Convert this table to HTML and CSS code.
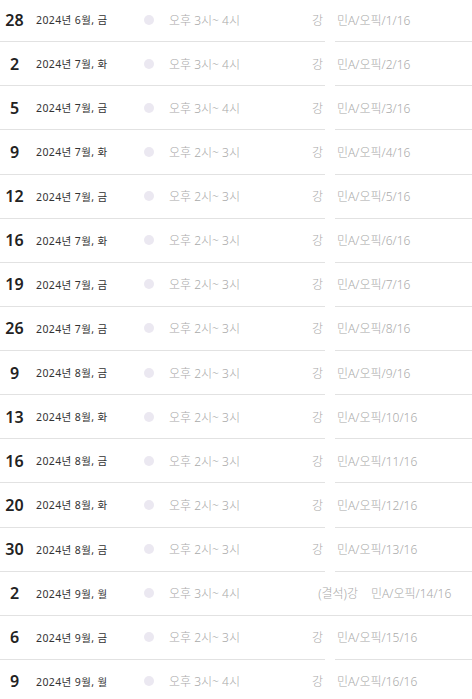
FILE: index.html
```html
<!DOCTYPE html>
<html lang="ko">
<head>
    <meta charset="UTF-8">
    <meta name="viewport" content="width=device-width, initial-scale=1.0">
    <title>수업 일정</title>
    <link rel="stylesheet" href="styles.css">
</head>
<body>
    <div class="schedule">
        <div class="row">
            <div class="main"><span class="day">28</span><span class="date">2024년 6월, 금</span><span class="dot"></span><span class="time">오후 3시~ 4시</span><span class="kind">강</span></div>
            <div class="title">민A/오픽/1/16</div>
        </div>
        <div class="row">
            <div class="main"><span class="day">2</span><span class="date">2024년 7월, 화</span><span class="dot"></span><span class="time">오후 3시~ 4시</span><span class="kind">강</span></div>
            <div class="title">민A/오픽/2/16</div>
        </div>
        <div class="row">
            <div class="main"><span class="day">5</span><span class="date">2024년 7월, 금</span><span class="dot"></span><span class="time">오후 3시~ 4시</span><span class="kind">강</span></div>
            <div class="title">민A/오픽/3/16</div>
        </div>
        <div class="row">
            <div class="main"><span class="day">9</span><span class="date">2024년 7월, 화</span><span class="dot"></span><span class="time">오후 2시~ 3시</span><span class="kind">강</span></div>
            <div class="title">민A/오픽/4/16</div>
        </div>
        <div class="row">
            <div class="main"><span class="day">12</span><span class="date">2024년 7월, 금</span><span class="dot"></span><span class="time">오후 2시~ 3시</span><span class="kind">강</span></div>
            <div class="title">민A/오픽/5/16</div>
        </div>
        <div class="row">
            <div class="main"><span class="day">16</span><span class="date">2024년 7월, 화</span><span class="dot"></span><span class="time">오후 2시~ 3시</span><span class="kind">강</span></div>
            <div class="title">민A/오픽/6/16</div>
        </div>
        <div class="row">
            <div class="main"><span class="day">19</span><span class="date">2024년 7월, 금</span><span class="dot"></span><span class="time">오후 2시~ 3시</span><span class="kind">강</span></div>
            <div class="title">민A/오픽/7/16</div>
        </div>
        <div class="row">
            <div class="main"><span class="day">26</span><span class="date">2024년 7월, 금</span><span class="dot"></span><span class="time">오후 2시~ 3시</span><span class="kind">강</span></div>
            <div class="title">민A/오픽/8/16</div>
        </div>
        <div class="row">
            <div class="main"><span class="day">9</span><span class="date">2024년 8월, 금</span><span class="dot"></span><span class="time">오후 2시~ 3시</span><span class="kind">강</span></div>
            <div class="title">민A/오픽/9/16</div>
        </div>
        <div class="row">
            <div class="main"><span class="day">13</span><span class="date">2024년 8월, 화</span><span class="dot"></span><span class="time">오후 2시~ 3시</span><span class="kind">강</span></div>
            <div class="title">민A/오픽/10/16</div>
        </div>
        <div class="row">
            <div class="main"><span class="day">16</span><span class="date">2024년 8월, 금</span><span class="dot"></span><span class="time">오후 2시~ 3시</span><span class="kind">강</span></div>
            <div class="title">민A/오픽/11/16</div>
        </div>
        <div class="row">
            <div class="main"><span class="day">20</span><span class="date">2024년 8월, 화</span><span class="dot"></span><span class="time">오후 2시~ 3시</span><span class="kind">강</span></div>
            <div class="title">민A/오픽/12/16</div>
        </div>
        <div class="row">
            <div class="main"><span class="day">30</span><span class="date">2024년 8월, 금</span><span class="dot"></span><span class="time">오후 2시~ 3시</span><span class="kind">강</span></div>
            <div class="title">민A/오픽/13/16</div>
        </div>
        <div class="row absent">
            <div class="main"><span class="day">2</span><span class="date">2024년 9월, 월</span><span class="dot"></span><span class="time">오후 3시~ 4시</span><span class="kind">(결석)강</span></div>
            <div class="title">민A/오픽/14/16</div>
        </div>
        <div class="row">
            <div class="main"><span class="day">6</span><span class="date">2024년 9월, 금</span><span class="dot"></span><span class="time">오후 2시~ 3시</span><span class="kind">강</span></div>
            <div class="title">민A/오픽/15/16</div>
        </div>
        <div class="row">
            <div class="main"><span class="day">9</span><span class="date">2024년 9월, 월</span><span class="dot"></span><span class="time">오후 3시~ 4시</span><span class="kind">강</span></div>
            <div class="title">민A/오픽/16/16</div>
        </div>
    </div>
</body>
</html>
```

FILE: styles.css
```css
* {
    margin: 0;
    padding: 0;
    box-sizing: border-box;
}

body {
    font-family: 'Noto Sans', 'Noto Sans CJK KR', sans-serif;
    background: #fff;
    overflow: hidden;
}

.schedule {
    margin-top: -2px;
}

.row {
    display: flex;
    height: 44.14px;
}

.main {
    width: 325px;
    display: flex;
    align-items: center;
    border-bottom: 1px solid #e2e2e2;
}

.title {
    flex: 1;
    margin-left: 10px;
    padding-left: 2px;
    display: flex;
    align-items: center;
    border-bottom: 1px solid #e2e2e2;
    font-size: 12px;
    font-weight: 300;
    color: #aaa;
}

.day {
    width: 29px;
    text-align: center;
    font-size: 16px;
    font-weight: 600;
    color: #222;
}

.date {
    width: 108px;
    margin-left: 7px;
    font-size: 10.5px;
    font-weight: 400;
    color: #333;
    letter-spacing: 0.4px;
}

.dot {
    width: 10px;
    height: 10px;
    border-radius: 50%;
    background: #ebe8f1;
    margin-right: 15px;
}

.time {
    font-size: 12px;
    font-weight: 300;
    color: #aaa;
}

.kind {
    margin-left: auto;
    padding-right: 2px;
    font-size: 12px;
    font-weight: 300;
    color: #aaa;
}

/* the absent row has a wider label and one unbroken line */
.absent {
    border-bottom: 1px solid #e2e2e2;
}

.absent .main {
    width: 360px;
    border-bottom: none;
}

.absent .title {
    padding-left: 1px;
    border-bottom: none;
}
```
